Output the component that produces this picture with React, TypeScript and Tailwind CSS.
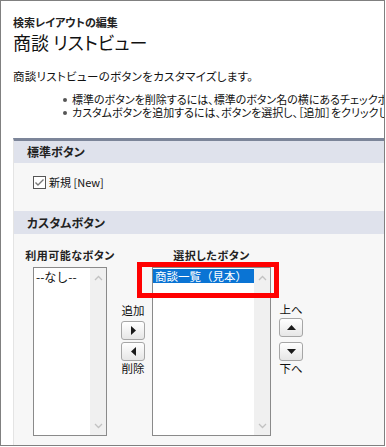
import React from "react";

function Chevron({ up }: { up?: boolean }) {
  return (
    <svg width="9" height="6" viewBox="0 0 9 6">
      <polyline
        points={up ? "1,5 4.5,1.5 8,5" : "1,1 4.5,4.5 8,1"}
        fill="none"
        stroke="#c2c2c2"
        strokeWidth="1.3"
      />
    </svg>
  );
}

function Scrollbar() {
  return (
    <div className="flex w-[16px] flex-col items-center justify-between bg-[#f0f0f0] pt-[7px] pb-[6px]">
      <Chevron up />
      <Chevron />
    </div>
  );
}

function ArrowButton({ dir }: { dir: "left" | "right" | "up" | "down" }) {
  const pts =
    dir === "right"
      ? "0,0 5,4.5 0,9"
      : dir === "left"
      ? "5,0 0,4.5 5,9"
      : dir === "up"
      ? "0,5 4.5,0 9,5"
      : "0,0 4.5,5 9,0";
  const vb = dir === "left" || dir === "right" ? "0 0 5 9" : "0 0 9 5";
  const w = dir === "left" || dir === "right" ? 5 : 9;
  const h = dir === "left" || dir === "right" ? 9 : 5;
  return (
    <div className="flex h-[19px] w-[24px] items-center justify-center rounded-[3px] border border-[#a6a6a6] bg-gradient-to-b from-[#ffffff] to-[#e6e6e6]">
      <svg width={w} height={h} viewBox={vb}>
        <polygon points={pts} fill="#1a1a1a" />
      </svg>
    </div>
  );
}

export default function App() {
  return (
    <div className="h-[447px] w-[386px] bg-white">
      <div className="flex h-[446px] w-[385px] flex-col overflow-hidden border border-[#808080] bg-white font-['Noto_Sans_CJK_JP',sans-serif] text-[#111] [font-feature-settings:'palt']">
        <div className="pl-[12px] pt-[14px]">
          <div className="h-[14px] text-[11px] leading-[14px] font-bold text-[#222]">
            検索レイアウトの編集
          </div>
          <div className="mt-[2px] h-[22px] text-[18px] leading-[22px] text-[#111]">
            商談 リストビュー
          </div>
          <div className="mt-[16px] h-[14px] text-[11.5px] leading-[14px] tracking-[0.3px] whitespace-nowrap">
            商談リストビューのボタンをカスタマイズします。
          </div>
          <div className="mt-[10px] flex flex-col">
            <div className="flex h-[13px] items-center whitespace-nowrap pl-[50px] text-[11px] leading-[13px]">
              <span className="mr-[5px] h-[4px] w-[4px] shrink-0 rounded-full bg-[#555]" />
              標準のボタンを削除するには、標準のボタン名の横にあるチェックボックスをオフにします。
            </div>
            <div className="flex h-[13px] items-center whitespace-nowrap pl-[50px] text-[11px] leading-[13px]">
              <span className="mr-[5px] h-[4px] w-[4px] shrink-0 rounded-full bg-[#555]" />
              カスタムボタンを追加するには、ボタンを選択し、［追加］をクリックします。
            </div>
          </div>
        </div>

        <div className="ml-[12px] mt-[19px] flex flex-1 flex-col border-t-[3px] border-l border-t-[#7c8599] border-l-[#e4e4e4] bg-[#f7f7f7]">
          <div className="flex h-[22px] items-center bg-[#dfe2ec] pl-[13px] text-[12px] font-bold text-[#222]">
            標準ボタン
          </div>
          <div className="h-[48px] pl-[19px] pt-[13px]">
            <div className="flex items-center">
              <svg width="13" height="13" viewBox="0 0 13 13">
                <rect x="0.5" y="0.5" width="12" height="12" fill="#fff" stroke="#555" />
                <polyline points="2.5,6.5 5,9 10.5,3.5" fill="none" stroke="#777" strokeWidth="1.4" />
              </svg>
              <span className="ml-[3px] text-[11px] leading-[13px]">新規 [New]</span>
            </div>
          </div>
          <div className="flex h-[23px] items-center bg-[#dfe2ec] pl-[13px] text-[12px] font-bold text-[#222]">
            カスタムボタン
          </div>
          <div className="flex flex-1 items-start pl-[19px] pt-[14px]">
            <div className="flex w-[74px] flex-col items-center">
              <div className="h-[14px] whitespace-nowrap text-[11px] font-bold leading-[14px] tracking-[0.5px] text-[#222]">
                利用可能なボタン
              </div>
              <div className="mt-[5px] flex h-[169px] w-[74px] border border-[#8a8a8a] bg-white">
                <div className="flex-1 pl-[2px] pt-[2px] text-[12px] leading-[14px] [font-feature-settings:normal]">
                  --なし--
                </div>
                <Scrollbar />
              </div>
            </div>

            <div className="ml-[14px] flex w-[24px] flex-col items-center pt-[55px]">
              <div className="h-[14px] whitespace-nowrap text-[11.5px] leading-[14px]">追加</div>
              <div className="mt-[4px]">
                <ArrowButton dir="right" />
              </div>
              <div className="mt-[2px]">
                <ArrowButton dir="left" />
              </div>
              <div className="h-[14px] whitespace-nowrap text-[11.5px] leading-[14px]">削除</div>
            </div>

            <div className="ml-[7px] flex w-[119px] flex-col items-center">
              <div className="h-[14px] whitespace-nowrap text-[11px] font-bold leading-[14px] tracking-[0.5px] text-[#222]">
                選択したボタン
              </div>
              <div className="relative mt-[5px] flex h-[169px] w-[119px] border border-[#8a8a8a] bg-white">
                <div className="flex-1 pt-[1px]">
                  <div className="h-[14px] bg-[#0a74d4] pl-[2px] text-[11.5px] leading-[14px] whitespace-nowrap text-white [font-feature-settings:normal]">
                    商談一覧（見本）
                  </div>
                </div>
                <Scrollbar />
                <div className="absolute left-[-16px] top-[-6px] h-[36px] w-[142px] border-[5px] border-[#ff0000]" />
              </div>
            </div>

            <div className="ml-[8px] flex w-[24px] flex-col items-center pt-[54px]">
              <div className="h-[14px] whitespace-nowrap text-[11.5px] leading-[14px]">上へ</div>
              <div className="mt-[2px]">
                <ArrowButton dir="up" />
              </div>
              <div className="mt-[5px]">
                <ArrowButton dir="down" />
              </div>
              <div className="h-[14px] whitespace-nowrap text-[11.5px] leading-[14px]">下へ</div>
            </div>
          </div>
        </div>
      </div>
    </div>
  );
}
